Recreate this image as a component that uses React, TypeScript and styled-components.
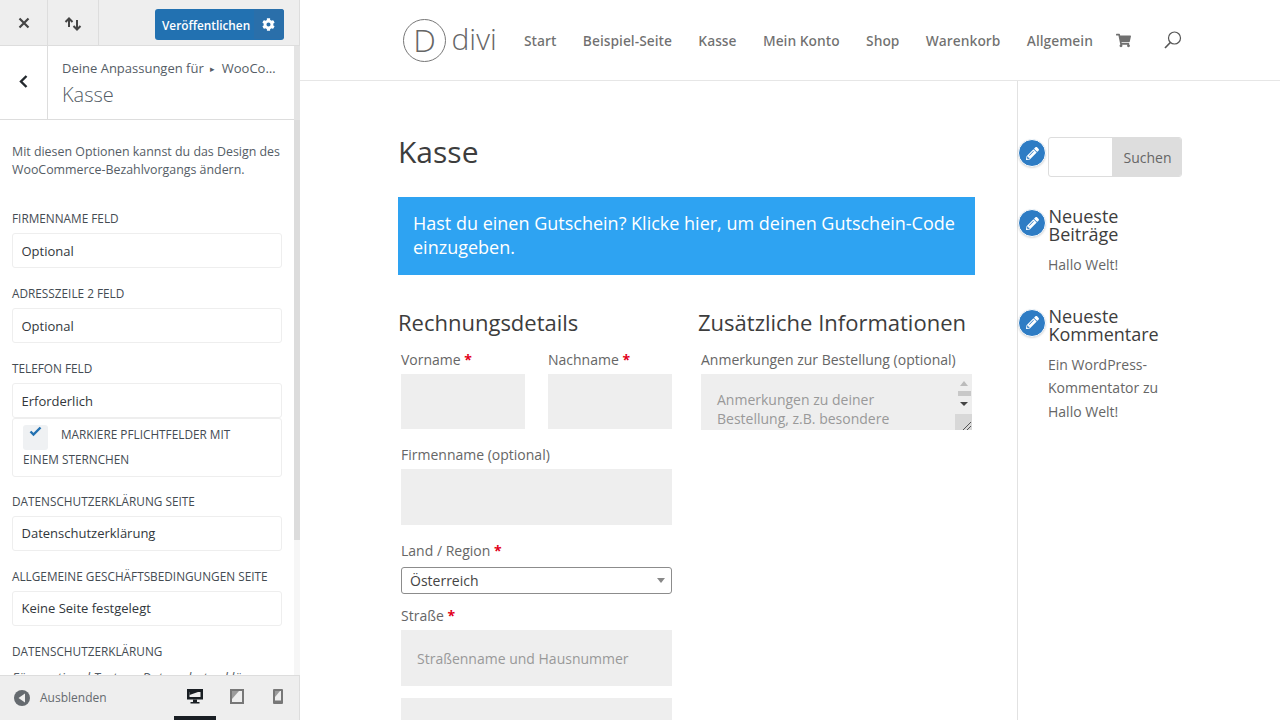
import React from "react";
import styled, { createGlobalStyle } from "styled-components";
import { FaCog, FaPencilAlt, FaShoppingCart } from "react-icons/fa";

const Global = createGlobalStyle`
  html, body { margin: 0; padding: 0; height: 720px; overflow: hidden; background: #fff; }
  body { font-family: "Open Sans", "Liberation Sans", sans-serif; color: #666; }
  * { box-sizing: border-box; }
`;

const Page = styled.div`display: flex; width: 1280px; height: 720px; overflow: hidden;`;

const Side = styled.aside`
  width: 300px; height: 720px; flex: none; display: flex; flex-direction: column;
  background: #eee; overflow: hidden;
`;
const TopBar = styled.div`
  height: 46px; flex: none; display: flex; align-items: stretch; background: #eee; border-bottom: 1px solid #ddd; border-right: 1px solid #ddd;
`;
const TopButton = styled.div<{ $w: number }>`
  width: ${p => p.$w}px; display: flex; align-items: center; justify-content: center;
  border-right: 1px solid #ddd; color: #444;
`;
const Publish = styled.div`
  margin: 9px 0 0 56px; width: 129px; height: 31px; display: flex; background: #2271b1; border-radius: 3px;
  color: #fff; font-size: 11.800px; font-weight: 600; align-items: center;
`;
const PublishLabel = styled.span`flex: 1; padding-left: 7px; white-space: nowrap;`;
const PublishGear = styled.span`
  width: 30px; height: 30px; align-self: flex-start; display: flex; align-items: center; justify-content: center; background: #2a6faa;
  border-radius: 0 3px 3px 0; font-size: 13px; padding-right: 1px;
`;
const Body = styled.div`flex: 1; min-height: 0; display: flex;`;
const Panel = styled.div`width: 294px; flex: none; background: #fff; display: flex; flex-direction: column; overflow: hidden;`;
const Scroll = styled.div`width: 6px; flex: none; background: #f6f6f6; display: flex; flex-direction: column;`;
const ScrollTop = styled.div`height: 74px; background: #e4e4e4;`;
const ScrollThumb = styled.div`height: 420px; background: #dcdcdc;`;
const Head = styled.div`height: 74px; flex: none; display: flex; border-bottom: 1px solid #ddd;`;
const Back = styled.div`
  width: 48px; flex: none; display: flex; align-items: center; justify-content: center; border-right: 1px solid #ddd; color: #23282d; padding-right: 1px; padding-bottom: 2px;
`;
const HeadText = styled.div`padding: 12px 0 0 14px; min-width: 0;`;
const Crumb = styled.div`font-size: 13px; line-height: 20px; color: #555d66; white-space: nowrap;`;
const Tri = styled.span`font-size: 9px; margin: 0 6.500px; vertical-align: 1px;`;
const HeadTitle = styled.div`margin-top: 2px; font-size: 20px; font-weight: 300; line-height: 28px; color: #555d66;`;
const Form = styled.div`padding: 22.500px 12px 0; flex: 1; min-height: 0; overflow: hidden;`;
const Desc = styled.p`margin: 0 0 31.400px; font-size: 12.400px; line-height: 18.600px; color: #555d66;`;
const FieldLabel = styled.div`font-size: 11.800px; font-weight: 500; line-height: 15px; padding-bottom: 1px; color: #444b52; text-transform: uppercase; white-space: nowrap;`;
const SelectBox = styled.div<{ $after?: number; $raised?: boolean }>`
  margin: 6px 0 ${p => p.$after ?? 18}px; height: 35px; width: 270px; padding: 0 0 ${p => p.$raised ? 2 : 0}px 8.500px; display: flex; align-items: center;
  font-size: 13px; color: #32373c; border: 1px solid #eee; border-radius: 3px; background: #fff;
`;
const CheckRow = styled.div`
  width: 270px; height: 59px; margin-bottom: 17px; border: 1px solid #eee; border-radius: 3px; padding: 3px 0 0 10px;
  font-size: 11.800px; font-weight: 500; line-height: 25px; color: #444b52; text-transform: uppercase;
`;
const CheckBox = styled.span`
  display: inline-flex; width: 25px; height: 25px; margin: 3px 13px -3px 0; border-radius: 3px; background: #eff1f3; color: #2271b1;
  vertical-align: top; justify-content: center; padding-top: 1px;
`;
const Hint = styled.div`margin-top: 8px; font-size: 13px; font-style: italic; line-height: 18px; color: #555d66; white-space: nowrap;`;
const Footer = styled.div`
  height: 45px; flex: none; display: flex; align-items: center; background: #eee; border-top: 1px solid #ddd; border-right: 1px solid #ddd; padding-left: 14px;
`;
const Hide = styled.div`display: flex; align-items: center; gap: 10px; font-size: 12px; color: #656a6f; width: 160px; padding-bottom: 1px;`;
const Device = styled.div<{ $w: number; $on?: boolean }>`
  width: ${p => p.$w}px; height: 44px; display: flex; align-items: center; justify-content: center; color: ${p => p.$on ? "#191e23" : "#656a6f"};
  border-bottom: ${p => p.$on ? "4px solid #191e23" : "4px solid transparent"};
`;

const Preview = styled.main`flex: 1; min-width: 0; height: 720px; overflow: hidden; background: #fff; display: flex; flex-direction: column;`;
const Header = styled.header`
  height: 81px; flex: none; border-bottom: 1px solid #e6e6e6; display: flex; align-items: center; padding: 0 0 0 103px;
`;
const Logo = styled.div`display: flex; align-items: center; width: 121px; flex: none;`;
const LogoMark = styled.div`
  width: 43px; height: 43px; border: 1px solid #777; border-radius: 50%; display: flex; align-items: center; justify-content: center;
  font-size: 32px; font-weight: 300; line-height: 1; color: #666;
`;
const LogoWord = styled.div`margin-left: 5.500px; font-size: 30px; font-weight: 300; line-height: 42px; color: #666; transform: translateY(-1px);`;
const Nav = styled.nav`display: flex; align-items: center; font-size: 13.800px; font-weight: 600; color: rgba(0,0,0,.56);`;
const NavItem = styled.span`margin-right: 26.400px; white-space: nowrap;`;
const Cart = styled.span`display: flex; font-size: 15px; margin: 0 33px 0 -3px;`;
const Content = styled.div`flex: 1; min-height: 0; display: flex; padding-left: 98px; overflow: hidden;`;
const Left = styled.div`width: 577px; flex: none; padding-top: 52px;`;
const Title = styled.h1`margin: 0 0 26px; font-size: 30px; font-weight: 400; line-height: 38px; color: #3d3d3d;`;
const Banner = styled.div`
  background: #2ea3f2; color: #fff; font-size: 18px; font-weight: 500; line-height: 24px; padding: 14px 15px; height: 78px; margin-bottom: 29px;
`;
const Cols = styled.div`display: flex; gap: 23px;`;
const Col = styled.div`width: 277px; flex: none;`;
const H3 = styled.h3`margin: 0 0 10px 0; font-size: 22px; font-weight: 400; line-height: 36px; color: #3d3d3d; white-space: nowrap;`;
const Row = styled.div`display: flex; gap: 23px; padding-left: 3px;`;
const Field = styled.div<{ $w?: number; $after?: number }>`
  width: ${p => p.$w ?? 271}px; flex: none; margin: 0 0 ${p => p.$after ?? 16}px 0;
`;
const Stack = styled.div`padding-left: 3px;`;
const Lab = styled.div`font-size: 14px; line-height: 20px; margin-bottom: 4px; color: #666; white-space: nowrap;`;
const Req = styled.span`color: #e2001a; font-weight: 700;`;
const Inp = styled.div<{ $h?: number }>`
  height: ${p => p.$h ?? 55}px; background: #eee; padding: 0 16px; display: flex; align-items: center; font-size: 14px; color: #999; white-space: nowrap;
`;
const Sel = styled.div`
  height: 27px; width: 271px; margin-top: 6px; border: 1px solid #8c8c8c; border-radius: 3px; padding-left: 8px; display: flex; align-items: center; justify-content: space-between;
  font-size: 14px; color: #444;
`;
const Caret = styled.span`
  width: 0; height: 0; border-left: 4px solid transparent; border-right: 4px solid transparent; border-top: 5px solid #888; margin-right: 6px;
`;
const TextArea = styled.div`
  height: 56px; width: 271px; background: #eee; position: relative; padding: 16px 16px 0; font-size: 14px; line-height: 19px; color: #999; overflow: hidden;
`;
const ScrollUi = styled.div`
  position: absolute; top: 0; right: 0; width: 16px; height: 56px; display: flex; flex-direction: column; align-items: center;
`;
const ArrowUp = styled.span`width: 0; height: 0; margin-top: 7px; border-left: 4px solid transparent; border-right: 4px solid transparent; border-bottom: 5px solid #bbb;`;
const Bar = styled.span`width: 13px; height: 5px; margin-top: 5px; background: #c8c8c8;`;
const ArrowDown = styled.span`width: 0; height: 0; margin-top: 6px; border-left: 4px solid transparent; border-right: 4px solid transparent; border-top: 4px solid #444;`;
const Grip = styled.span`
  position: absolute; bottom: 0; right: 0; width: 17px; height: 16px; background: #d8d8d8; color: #666; display: flex;
`;
const Aside = styled.aside`flex: 1; min-width: 0; margin-left: 42px; border-left: 1px solid #e2e2e2; padding: 56px 0 0 30px; display: flex; flex-direction: column;`;
const Widget = styled.div<{ $after: number }>`position: relative; margin-bottom: ${p => p.$after}px;`;
const Pencil = styled.span<{ $top: number }>`
  position: absolute; left: -30px; top: ${p => p.$top}px; width: 28px; height: 28px; border-radius: 50%; background: #2e7cc4;
  border: 1.500px solid #fff; box-shadow: 0 1px 2px rgba(0,0,0,.15); color: #fff; display: flex; align-items: center; justify-content: center; font-size: 13px;
`;
const SearchRow = styled.div`display: flex; width: 134px; height: 40px; border: 1px solid #ddd; border-radius: 3px; overflow: hidden;`;
const SearchInput = styled.div`flex: 1;`;
const SearchButton = styled.div`
  width: 69px; background: #ddd; font-size: 14px; color: #666; display: flex; align-items: center; justify-content: center; padding-left: 2px;
`;
const WTitle = styled.div`font-size: 18px; line-height: 18px; color: #3d3d3d; margin: 0 0 10px 0.500px;`;
const WText = styled.div`font-size: 14px; line-height: 23.500px; color: #666; width: 130px;`;

const Arrows = () => (
  <svg width="18" height="14" viewBox="0 0 18 14" fill="none" stroke="currentColor" strokeWidth="2" style={{ marginTop: 2 }}>
    <path d="M5 10V1.500M1.500 5 5 1.500 8.500 5M13 3v9.500M9.500 9l3.500 3.500L16.500 9" />
  </svg>
);
const Close = () => (
  <svg width="12" height="12" viewBox="0 0 12 12" fill="none" stroke="currentColor" strokeWidth="2.200">
    <path d="M1.500 1.500l9 9M10.500 1.500l-9 9" />
  </svg>
);
const Chevron = () => (
  <svg width="9" height="13" viewBox="0 0 9 13" fill="none" stroke="currentColor" strokeWidth="2.400">
    <path d="M7.500 1 2 6.500 7.500 12" />
  </svg>
);
const Tick = () => (
  <svg width="13" height="11" viewBox="0 0 13 11" fill="none" stroke="currentColor" strokeWidth="2.400">
    <path d="M1.500 5.500l3 3L11.500 1.500" />
  </svg>
);
const HideIcon = () => (
  <svg width="16" height="16" viewBox="0 0 16 16"><circle cx="8" cy="8" r="8" fill="#656a6f" /><path d="M11 3.500v9L4.500 8z" fill="#eee" /></svg>
);
const Desktop = () => (
  <svg width="16" height="16" viewBox="0 0 16 16" fill="currentColor">
    <path fillRule="evenodd" d="M0 1h16v10.500H0zM2.500 4v5h11V4z" /><path d="M2.500 4H11L2.500 7zM6 11.500h4V14h2.500v1.500h-9V14H6z" />
  </svg>
);
const Tablet = () => (
  <svg width="14" height="15" viewBox="0 0 14 15" fill="#777">
    <path fillRule="evenodd" d="M0 0h14v15H0zM2 2v11h10V2z" /><path d="M2 2h7L2 10z" opacity=".7" />
  </svg>
);
const Phone = () => (
  <svg width="10" height="15" viewBox="0 0 10 15" fill="#777">
    <path fillRule="evenodd" d="M1 0h8a1 1 0 0 1 1 1v13a1 1 0 0 1-1 1H1a1 1 0 0 1-1-1V1a1 1 0 0 1 1-1zM2 2v9.500h6V2z" /><path d="M2 2h5L2 8z" opacity=".7" />
  </svg>
);
const SearchIcon = () => (
  <svg width="18" height="18" viewBox="0 0 18 18" fill="none" stroke="#555" strokeWidth="1.200">
    <circle cx="10.500" cy="7" r="6" /><path d="M6.300 11.500 1 17" strokeWidth="1.700" />
  </svg>
);
const GripLines = () => (
  <svg width="17" height="16" viewBox="0 0 17 16" stroke="#555" strokeWidth="1"><path d="M8 16l8-8M12 16l4-4" /></svg>
);

const fields = [
  ["Firmenname Feld", "Optional"],
  ["Adresszeile 2 Feld", "Optional"],
];
const later = [
  ["Datenschutzerklärung Seite", "Datenschutzerklärung"],
  ["Allgemeine Geschäftsbedingungen Seite", "Keine Seite festgelegt"],
];
const navItems = ["Start", "Beispiel-Seite", "Kasse", "Mein Konto", "Shop", "Warenkorb", "Allgemein"];

export default function App() {
  return (
    <Page>
      <Global />
      <Side>
        <TopBar>
          <TopButton $w={48}><Close /></TopButton>
          <TopButton $w={51}><Arrows /></TopButton>
          <Publish>
            <PublishLabel>Veröffentlichen</PublishLabel>
            <PublishGear><FaCog /></PublishGear>
          </Publish>
        </TopBar>
        <Body>
          <Panel>
            <Head>
              <Back><Chevron /></Back>
              <HeadText>
                <Crumb>Deine Anpassungen für<Tri>▸</Tri>WooCo…</Crumb>
                <HeadTitle>Kasse</HeadTitle>
              </HeadText>
            </Head>
            <Form>
              <Desc>Mit diesen Optionen kannst du das Design des WooCommerce-Bezahlvorgangs ändern.</Desc>
              {fields.map(([l, v]) => (
                <div key={l}>
                  <FieldLabel>{l}</FieldLabel>
                  <SelectBox>{v}</SelectBox>
                </div>
              ))}
              <FieldLabel>Telefon Feld</FieldLabel>
              <SelectBox $after={0}>Erforderlich</SelectBox>
              <CheckRow><CheckBox><Tick /></CheckBox>Markiere Pflichtfelder mit<br />einem Sternchen</CheckRow>
              {later.map(([l, v]) => (
                <div key={l}>
                  <FieldLabel>{l}</FieldLabel>
                  <SelectBox $raised>{v}</SelectBox>
                </div>
              ))}
              <FieldLabel>Datenschutzerklärung</FieldLabel>
              <Hint>Füge optional Text zur Datenschutzerklärung</Hint>
            </Form>
          </Panel>
          <Scroll><ScrollTop /><ScrollThumb /></Scroll>
        </Body>
        <Footer>
          <Hide><HideIcon />Ausblenden</Hide>
          <Device $w={42} $on><Desktop /></Device>
          <Device $w={42}><Tablet /></Device>
          <Device $w={40}><Phone /></Device>
        </Footer>
      </Side>
      <Preview>
        <Header>
          <Logo>
            <LogoMark>D</LogoMark>
            <LogoWord>divi</LogoWord>
          </Logo>
          <Nav>
            {navItems.map(n => <NavItem key={n}>{n}</NavItem>)}
            <Cart><FaShoppingCart /></Cart>
            <SearchIcon />
          </Nav>
        </Header>
        <Content>
          <Left>
            <Title>Kasse</Title>
            <Banner>Hast du einen Gutschein? Klicke hier, um deinen Gutschein-Code einzugeben.</Banner>
            <Cols>
              <Col>
                <H3>Rechnungsdetails</H3>
                <Row>
                  <Field $w={124}><Lab>Vorname <Req>*</Req></Lab><Inp /></Field>
                  <Field $w={124}><Lab>Nachname <Req>*</Req></Lab><Inp /></Field>
                </Row>
                <Stack>
                  <Field><Lab>Firmenname (optional)</Lab><Inp $h={56} /></Field>
                  <Field $after={12}><Lab>Land / Region <Req>*</Req></Lab><Sel>Österreich<Caret /></Sel></Field>
                  <Field $after={12}><Lab>Straße <Req>*</Req></Lab><Inp $h={56}>Straßenname und Hausnummer</Inp></Field>
                  <Field><Inp $h={56} /></Field>
                </Stack>
              </Col>
              <Col>
                <H3>Zusätzliche Informationen</H3>
                <Stack>
                  <Lab>Anmerkungen zur Bestellung (optional)</Lab>
                  <TextArea>
                    Anmerkungen zu deiner<br />Bestellung, z.B. besondere
                    <ScrollUi><ArrowUp /><Bar /><ArrowDown /></ScrollUi>
                    <Grip><GripLines /></Grip>
                  </TextArea>
                </Stack>
              </Col>
            </Cols>
          </Left>
          <Aside>
            <Widget $after={30}>
              <Pencil $top={2}><FaPencilAlt /></Pencil>
              <SearchRow><SearchInput /><SearchButton>Suchen</SearchButton></SearchRow>
            </Widget>
            <Widget $after={30}>
              <Pencil $top={2}><FaPencilAlt /></Pencil>
              <WTitle>Neueste<br />Beiträge</WTitle>
              <WText>Hallo Welt!</WText>
            </Widget>
            <Widget $after={0}>
              <Pencil $top={2}><FaPencilAlt /></Pencil>
              <WTitle>Neueste<br />Kommentare</WTitle>
              <WText>Ein WordPress-Kommentator zu Hallo Welt!</WText>
            </Widget>
          </Aside>
        </Content>
      </Preview>
    </Page>
  );
}
